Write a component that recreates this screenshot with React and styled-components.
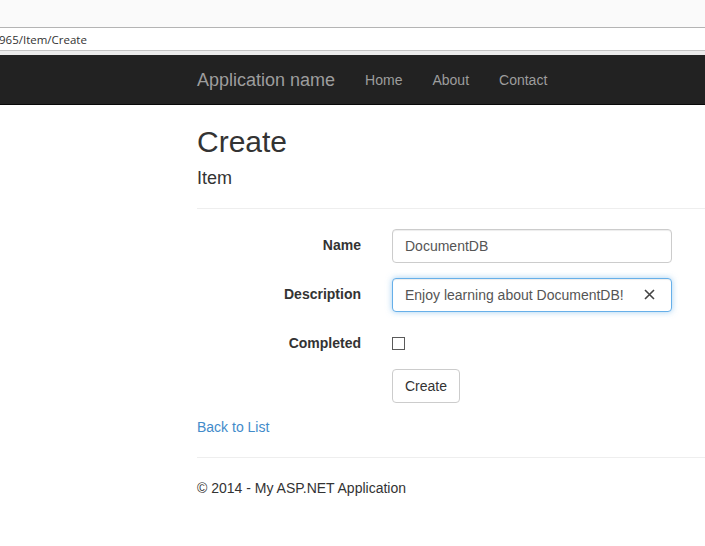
import React from 'react';
import styled, { createGlobalStyle } from 'styled-components';

const GlobalStyle = createGlobalStyle`
  html, body {
    margin: 0;
    padding: 0;
    background: #ffffff;
  }
  body {
    font-family: "Liberation Sans", Arial, sans-serif;
    font-size: 14px;
    line-height: 1.428571;
    color: #333333;
    overflow: hidden;
  }
`;

// --- 브라우저 상단 영역 ---
const Chrome = styled.div`
  background: #fafafa;
  height: 27px;
  border-bottom: 1px solid #b4b4b4;
`;

const AddressBar = styled.div`
  height: 22px;
  background: #ffffff;
  border-bottom: 1px solid #c4c4c4;
  font-family: "Open Sans", "Noto Sans", sans-serif;
  font-size: 11.5px;
  line-height: 23px;
  color: #333333;
  text-indent: -1px;
  white-space: nowrap;
  overflow: hidden;
`;

const ChromeGap = styled.div`
  height: 4px;
  background: #ececec;
`;

// --- 내비게이션 바 ---
const Navbar = styled.nav`
  height: 50px;
  background: #222222;
  border-bottom: 1px solid #080808;
  box-sizing: border-box;
  display: flex;
  align-items: center;
  padding-left: 182px;
`;

const Brand = styled.a`
  font-size: 18px;
  color: #9d9d9d;
  padding: 0 15px;
  line-height: 50px;
  text-decoration: none;
`;

const NavLink = styled.a`
  font-size: 14px;
  color: #9d9d9d;
  padding: 0 15px;
  line-height: 50px;
  text-decoration: none;
`;

// --- 본문 ---
const Container = styled.main`
  padding-left: 197px;
`;

const Title = styled.h2`
  font-size: 30px;
  font-weight: 500;
  line-height: 1.1;
  margin: 20px 0 10px;
  color: #333333;
`;

const SubTitle = styled.h4`
  font-size: 18px;
  font-weight: 500;
  line-height: 1.1;
  margin: 11px 0 10px;
`;

const Rule = styled.hr`
  margin: ${(p) => (p.$top ? '19px 0 20px' : '20px 0')};
  border: 0;
  border-top: 1px solid #eeeeee;
`;

const Form = styled.form`
  display: flex;
  flex-direction: column;
`;

const FormGroup = styled.div`
  display: grid;
  grid-template-columns: 164px 280px;
  column-gap: 31px;
  margin-bottom: ${(p) => (p.$last ? '14px' : '15px')};
  align-items: start;
`;

const Label = styled.label`
  font-weight: 700;
  text-align: right;
  padding-top: ${(p) => (p.$check ? '6px' : '6.5px')};
  line-height: 20px;
`;

const InputWrap = styled.div`
  position: relative;
`;

const Input = styled.input`
  display: block;
  width: 100%;
  height: 34px;
  box-sizing: border-box;
  padding: 6px 12px;
  font-family: inherit;
  font-size: 14px;
  color: #555555;
  background: #ffffff;
  border: 1px solid ${(p) => (p.$focus ? '#66afe9' : '#cccccc')};
  border-radius: 4px;
  outline: none;
  box-shadow: ${(p) =>
    p.$focus
      ? 'inset 0 1px 1px rgba(0,0,0,.075), 0 0 6px rgba(102,175,233,.6)'
      : 'inset 0 1px 1px rgba(0,0,0,.075)'};
`;

const ClearButton = styled.span`
  position: absolute;
  right: 17px;
  top: 11px;
  width: 11px;
  height: 11px;
  display: flex;
`;

const CheckRow = styled.div`
  height: 27px;
  padding-top: 10px;
  box-sizing: border-box;
`;

const CheckBox = styled.input`
  appearance: none;
  display: block;
  margin: 0;
  width: 13px;
  height: 13px;
  border: 1px solid #5a5a5a;
  box-sizing: border-box;
  background: #ffffff;
`;

const Button = styled.button`
  font-family: inherit;
  font-size: 14px;
  line-height: 20px;
  color: #333333;
  background: #ffffff;
  border: 1px solid #cccccc;
  border-radius: 4px;
  padding: 6px 12px;
  height: 34px;
  cursor: pointer;
  justify-self: start;
`;

const BackLink = styled.a`
  color: #428bca;
  text-decoration: none;
  line-height: 20px;
  display: block;
`;

const Footer = styled.footer`
  p {
    margin: 0;
    line-height: 20px;
  }
`;

const App = () => {
  return (
    <>
      <GlobalStyle />
      <Chrome />
      <AddressBar>965/Item/Create</AddressBar>
      <ChromeGap />
      <Navbar>
        <Brand href="#">Application name</Brand>
        <NavLink href="#">Home</NavLink>
        <NavLink href="#">About</NavLink>
        <NavLink href="#">Contact</NavLink>
      </Navbar>
      <Container>
        <Title>Create</Title>
        <SubTitle>Item</SubTitle>
        <Rule $top />
        <Form onSubmit={(e) => e.preventDefault()}>
          <FormGroup>
            <Label>Name</Label>
            <Input type="text" defaultValue="DocumentDB" />
          </FormGroup>
          <FormGroup>
            <Label>Description</Label>
            <InputWrap>
              <Input type="text" $focus defaultValue="Enjoy learning about DocumentDB!" />
              <ClearButton>
                <svg width="11" height="11" viewBox="0 0 11 11">
                  <path d="M1 1 L10 10 M10 1 L1 10" stroke="#444" strokeWidth="1.6" />
                </svg>
              </ClearButton>
            </InputWrap>
          </FormGroup>
          <FormGroup>
            <Label $check>Completed</Label>
            <CheckRow>
              <CheckBox type="checkbox" />
            </CheckRow>
          </FormGroup>
          <FormGroup $last>
            <span />
            <Button type="submit">Create</Button>
          </FormGroup>
        </Form>
        <BackLink href="#">Back to List</BackLink>
        <Rule />
        <Footer>
          <p>© 2014 - My ASP.NET Application</p>
        </Footer>
      </Container>
    </>
  );
};

export default App;
